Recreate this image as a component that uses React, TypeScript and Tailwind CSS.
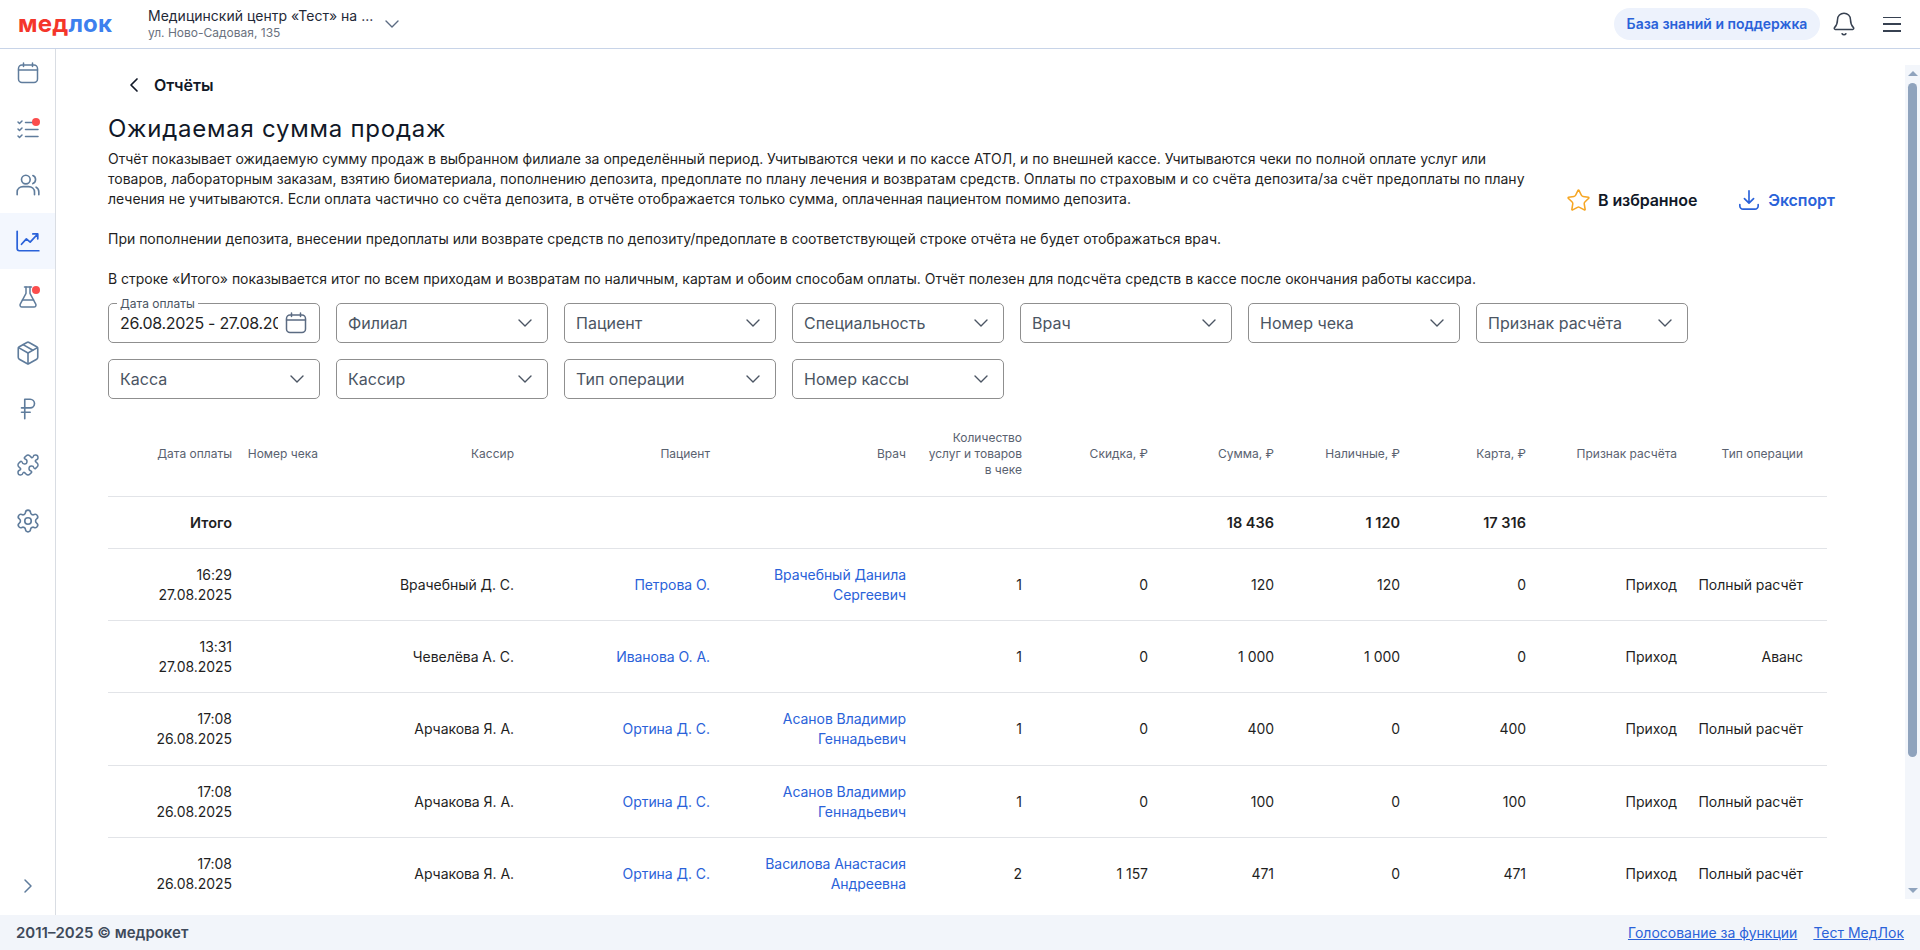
import React from "react";
import { Bell, ChevronDown, ChevronLeft, ChevronRight, FlaskConical, Package, Puzzle, RussianRuble, Settings, Star } from "lucide-react";

const CalendarIcon = ({ className }: { className?: string }) => (
  <svg viewBox="0 0 24 24" fill="none" stroke="currentColor" strokeWidth="1.5" strokeLinecap="round" strokeLinejoin="round" className={className}>
    <rect x="2.5" y="4" width="19" height="17.5" rx="3.5" />
    <path d="M2.5 9h19M7.5 2v3.5M16.5 2v3.5" />
  </svg>
);
const TasksIcon = ({ className }: { className?: string }) => (
  <svg viewBox="0 0 24 24" fill="none" stroke="currentColor" strokeWidth="1.5" strokeLinecap="round" strokeLinejoin="round" className={className}>
    <path d="M2 5l1.5 1.5L6 4M2 12l1.5 1.5L6 11M2 19l1.5 1.5L6 18M9.5 5.5H22M9.5 12.5H22M9.5 19.5H22" />
  </svg>
);
const UsersIcon = ({ className }: { className?: string }) => (
  <svg viewBox="0 0 24 24" fill="none" stroke="currentColor" strokeWidth="1.5" strokeLinecap="round" strokeLinejoin="round" className={className}>
    <circle cx="10" cy="7" r="4" />
    <path d="M2 21v-2.500C2 15.500 4.500 13.500 7.500 13.500h5c3 0 5.500 2 5.500 5V21M16.500 3.300a4 4 0 0 1 0 7.400M19.500 14c1.700.8 2.500 2.500 2.500 4.500V21" />
  </svg>
);
const ChartIcon = ({ className }: { className?: string }) => (
  <svg viewBox="0 0 24 24" fill="none" stroke="currentColor" strokeWidth="1.6" strokeLinecap="round" strokeLinejoin="round" className={className}>
    <path d="M2 3v16a2 2 0 0 0 2 2h18M6 15l4.500-5 3.500 3 6.500-7M16.500 5.500h4.500V10" />
  </svg>
);
const ExportIcon = ({ className }: { className?: string }) => (
  <svg viewBox="0 0 24 24" fill="none" stroke="currentColor" strokeWidth="1.8" strokeLinecap="round" strokeLinejoin="round" className={className}>
    <path d="M12 2v13M7 10.500l5 5 5-5M2 17v1.500A3.500 3.500 0 0 0 5.500 22h13a3.500 3.500 0 0 0 3.500-3.500V17" />
  </svg>
);

const nav = [
  { Icon: CalendarIcon, first: true, big: false },
  { Icon: TasksIcon, dot: true },
  { Icon: UsersIcon, big: true },
  { Icon: ChartIcon, active: true, big: true },
  { Icon: FlaskConical, dot: true },
  { Icon: Package, big: true },
  { Icon: RussianRuble, big: true },
  { Icon: Puzzle },
  { Icon: Settings, big: true },
];

const row1 = ["Филиал", "Пациент", "Специальность", "Врач", "Номер чека", "Признак расчёта"];
const row2 = ["Касса", "Кассир", "Тип операции", "Номер кассы"];

const widths = [124, 86, 196, 196, 196, 116, 126, 126, 126, 126, 151, 126, 24];
const heads = ["Дата оплаты", "Номер чека", "Кассир", "Пациент", "Врач", "Количество услуг и товаров в чеке", "Скидка, ₽", "Сумма, ₽", "Наличные, ₽", "Карта, ₽", "Признак расчёта", "Тип операции", ""];

const rows = [
  ["16:29", "27.08.2025", "Врачебный Д. С.", "Петрова О.", "Врачебный Данила Сергеевич", "1", "0", "120", "120", "0", "Приход", "Полный расчёт"],
  ["13:31", "27.08.2025", "Чевелёва А. С.", "Иванова О. А.", "", "1", "0", "1 000", "1 000", "0", "Приход", "Аванс"],
  ["17:08", "26.08.2025", "Арчакова Я. А.", "Ортина Д. С.", "Асанов Владимир Геннадьевич", "1", "0", "400", "0", "400", "Приход", "Полный расчёт"],
  ["17:08", "26.08.2025", "Арчакова Я. А.", "Ортина Д. С.", "Асанов Владимир Геннадьевич", "1", "0", "100", "0", "100", "Приход", "Полный расчёт"],
  ["17:08", "26.08.2025", "Арчакова Я. А.", "Ортина Д. С.", "Василова Анастасия Андреевна", "2", "1 157", "471", "0", "471", "Приход", "Полный расчёт"],
];

const Select = ({ label }: { label: string }) => (
  <div className="flex h-10 w-[212px] items-center justify-between rounded-[5px] border border-[#8f8f8f] pl-[11px] pr-[10px] text-base text-[#4b5563]">
    <span>{label}</span>
    <ChevronDown className="h-6 w-6 text-[#4b5563]" strokeWidth={1.4} />
  </div>
);

const Cell = ({ children, className = "" }: { children?: React.ReactNode; className?: string }) => (
  <td className={"border-b border-[#e2e4e8] text-right align-middle leading-5 text-[#1f1f1f] " + className}>{children}</td>
);
const Body = "text-sm tracking-[-0.05px]";

export default function App() {
  return (
    <div className="flex h-[950px] w-[1920px] flex-col overflow-hidden bg-white font-['Inter',sans-serif]">
      <header className="flex h-[49px] shrink-0 items-center border-b border-[#c8d4e8] pr-[19px]">
        <div className="ml-[18px] w-[130px] text-[24px] font-bold leading-none tracking-[0.2px]">
          <span className="text-[#f4352a]">мед</span>
          <span className="text-[#3d80ee]">лок</span>
        </div>
        <div className="flex flex-col">
          <span className="text-sm leading-[18px] text-[#1f2937]">Медицинский центр «Тест» на ...</span>
          <span className="text-xs leading-4 text-[#6b7280]">ул. Ново-Садовая, 135</span>
        </div>
        <ChevronDown className="ml-[7px] h-6 w-6 text-[#5b6b82]" strokeWidth={1.4} />
        <div className="ml-auto flex h-8 w-[206px] items-center justify-center rounded-full bg-[#edf2fc] text-sm font-semibold text-[#2a62d9]">
          База знаний и поддержка
        </div>
        <Bell className="ml-[11px] h-[26px] w-[26px] text-[#374151]" strokeWidth={1.4} />
        <div className="ml-[26px] flex h-[15px] w-[18px] flex-col justify-between">
          <span className="h-[1.5px] bg-[#374151]" />
          <span className="h-[1.5px] bg-[#374151]" />
          <span className="h-[1.5px] bg-[#374151]" />
        </div>
      </header>

      <div className="flex min-h-0 flex-1">
        <aside className="flex w-[56px] shrink-0 flex-col border-r border-[#d9dde3]">
          {nav.map(({ Icon, dot, active, first, big }, i) => (
            <div
              key={i}
              className={
                "relative flex w-full items-center justify-center " +
                (first ? "h-[52px] pb-[4px] " : "h-[56px] ") +
                (active ? "bg-[#f3f7fe] text-[#2a62d9]" : "text-[#5f7c9c]")
              }
            >
              <Icon className={big ? "h-[26px] w-[26px]" : "h-6 w-6"} strokeWidth={1.5} />
              {dot && <span className="absolute left-[32px] top-[17px] h-2 w-2 rounded-full bg-[#fb4d4d]" />}
            </div>
          ))}
          <div className="mt-auto flex h-[58px] items-center justify-center text-[#5f7c9c]">
            <ChevronRight className="h-6 w-6" strokeWidth={1.5} />
          </div>
        </aside>

        <main className="flex min-w-0 flex-1 py-4">
          <div className="min-w-0 flex-1 overflow-hidden pl-[52px]">
            <div className="flex h-10 items-center pl-[14px] text-base font-semibold text-[#111827]">
              <ChevronLeft className="h-6 w-6" strokeWidth={1.7} />
              <span className="ml-[8px]">Отчёты</span>
            </div>
            <h1 className="mb-[4px] mt-[8px] text-2xl font-normal leading-8 tracking-[0.75px] text-[#111827]">Ожидаемая сумма продаж</h1>
            <div className="flex items-start">
              <p className="w-[1430px] shrink-0 whitespace-pre-line text-sm leading-5 tracking-[-0.013px] text-[#1f1f1f]">
                {"Отчёт показывает ожидаемую сумму продаж в выбранном филиале за определённый период. Учитываются чеки и по кассе АТОЛ, и по внешней кассе. Учитываются чеки по полной оплате услуг или\nтоваров, лабораторным заказам, взятию биоматериала, пополнению депозита, предоплате по плану лечения и возвратам средств. Оплаты по страховым и со счёта депозита/за счёт предоплаты по плану\nлечения не учитываются. Если оплата частично со счёта депозита, в отчёте отображается только сумма, оплаченная пациентом помимо депозита.\n\nПри пополнении депозита, внесении предоплаты или возврате средств по депозиту/предоплате в соответствующей строке отчёта не будет отображаться врач.\n\nВ строке «Итого» показывается итог по всем приходам и возвратам по наличным, картам и обоим способам оплаты. Отчёт полезен для подсчёта средств в кассе после окончания работы кассира."}
              </p>
              <div className="ml-[28px] mt-[39px] flex h-6 shrink-0 items-center whitespace-nowrap tracking-[-0.1px]">
                <Star className="h-[25px] w-[25px] shrink-0 text-[#f6a623]" strokeWidth={1.5} />
                <span className="ml-[7px] text-base font-semibold text-[#111827]">В избранное</span>
                <ExportIcon className="ml-[41px] h-[22px] w-[22px] shrink-0 text-[#2a62d9]" />
                <span className="ml-[8px] text-base font-semibold text-[#2a62d9]">Экспорт</span>
              </div>
            </div>

            <div className="mt-[14px] flex w-[1719px] flex-wrap gap-4">
              <div className="relative flex h-10 w-[212px] items-center rounded-[5px] border border-[#8f8f8f] pl-[11px] text-base text-[#1f1f1f]">
                <span className="absolute -top-[7px] left-[8px] bg-white px-[3px] text-xs leading-[13px] text-[#4b5563]">Дата оплаты</span>
                <span className="w-[158px] shrink-0 overflow-hidden whitespace-nowrap tracking-[-0.3px]">26.08.2025 - 27.08.2025</span>
                <CalendarIcon className="ml-[6px] h-6 w-6 shrink-0 text-[#5b6b82]" />
              </div>
              {row1.map((l) => <Select key={l} label={l} />)}
              {row2.map((l) => <Select key={l} label={l} />)}
            </div>

            <table className="mt-[13px] w-[1719px] table-fixed border-separate border-spacing-0">
              <colgroup>
                {widths.map((w, i) => <col key={i} style={{ width: w }} />)}
              </colgroup>
              <thead>
                <tr>
                  {heads.map((h, i) => (
                    <th key={i} className={"h-[85px] border-b border-[#e2e4e8] text-right align-middle text-xs font-normal leading-4 text-[#5a6270] " + (i === 1 ? "whitespace-nowrap pl-0" : "pl-[16px]")}>
                      {h}
                    </th>
                  ))}
                </tr>
              </thead>
              <tbody>
                <tr>
                  <Cell className="h-[52px] text-[14.5px] font-semibold">Итого</Cell>
                  <Cell /><Cell /><Cell /><Cell /><Cell /><Cell />
                  <Cell className="text-[14.5px] font-semibold">18 436</Cell>
                  <Cell className="text-[14.5px] font-semibold">1 120</Cell>
                  <Cell className="text-[14.5px] font-semibold">17 316</Cell>
                  <Cell /><Cell /><Cell />
                </tr>
                {rows.map((r, i) => (
                  <tr key={i}>
                    <Cell className={(i === 2 ? "h-[73px] " : "h-[72px] ") + Body}><div>{r[0]}</div><div>{r[1]}</div></Cell>
                    <Cell />
                    <Cell className={Body}>{r[2]}</Cell>
                    <Cell className={Body + " text-[#2a62d9]"}>{r[3]}</Cell>
                    <Cell className={Body + " pl-[16px] text-[#2a62d9]"}>{r[4]}</Cell>
                    <Cell className={Body}>{r[5]}</Cell>
                    <Cell className={Body}>{r[6]}</Cell>
                    <Cell className={Body}>{r[7]}</Cell>
                    <Cell className={Body}>{r[8]}</Cell>
                    <Cell className={Body}>{r[9]}</Cell>
                    <Cell className={Body}>{r[10]}</Cell>
                    <Cell className={Body}>{r[11]}</Cell>
                    <Cell />
                  </tr>
                ))}
              </tbody>
            </table>
          </div>

          <div className="flex w-[15px] shrink-0 flex-col items-center bg-[#f3f6fb]">
            <span className="mt-[6px] h-0 w-0 border-x-[5px] border-b-[5px] border-x-transparent border-b-[#8fa3bd]" />
            <span className="mt-[7px] h-[674px] w-[9px] rounded-full bg-[#8fa3bd]" />
            <span className="mb-[6px] mt-auto h-0 w-0 border-x-[5px] border-t-[5px] border-x-transparent border-t-[#8fa3bd]" />
          </div>
        </main>
      </div>

      <footer className="flex h-[35px] shrink-0 items-center bg-[#f2f5fa] pl-4 pr-[16px] text-sm">
        <span className="text-[15px] font-semibold text-[#3f4a5a]">2011–2025 © медрокет</span>
        <a className="ml-auto text-[#2a62d9] underline">Голосование за функции</a>
        <a className="ml-4 text-[#2a62d9] underline">Тест МедЛок</a>
      </footer>
    </div>
  );
}
